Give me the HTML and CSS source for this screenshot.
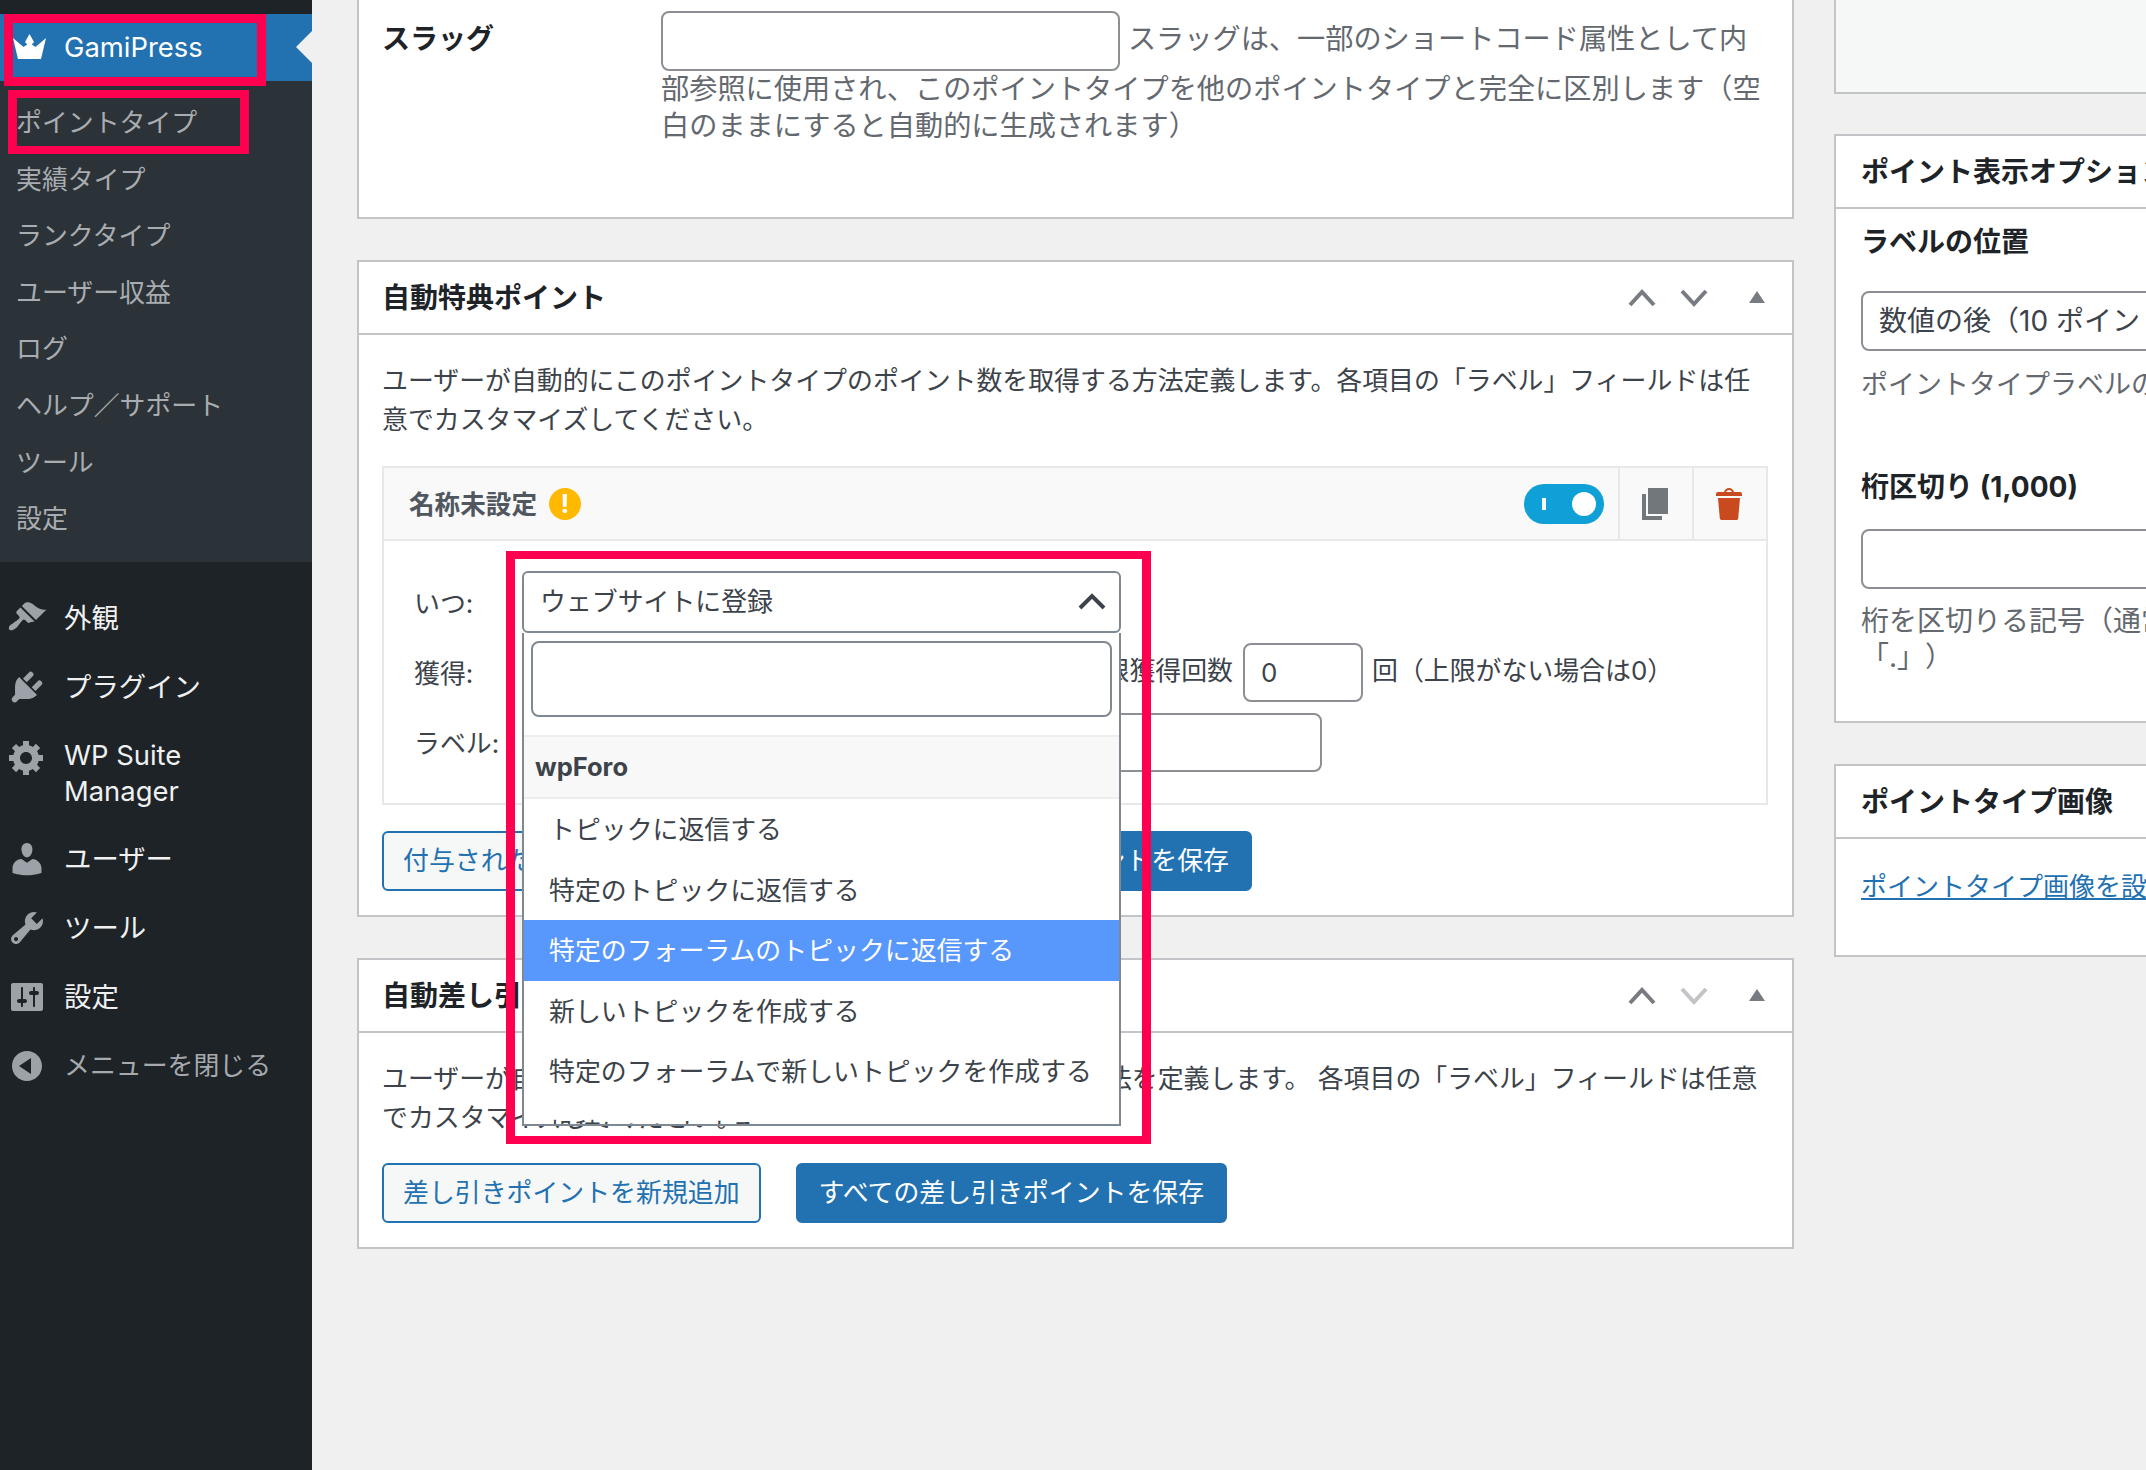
FILE: index.html
```html
<!DOCTYPE html>
<html lang="ja">
<head>
<meta charset="utf-8">
<title>GamiPress ポイントタイプ</title>
<link rel="stylesheet" href="styles.css">
</head>
<body>
<div class="page">
  <nav class="sidebar">
    <a class="current">
      <svg class="crown" viewBox="0 0 33 25"><path d="M16.500 0L21 8l-2.200 2.500L22.500 13 33 4l-5 21H5L0 4l10.500 9 3.700-2.500L12 8z"/></svg>
      <span>GamiPress</span>
    </a>
    <ul class="submenu">
      <li>ポイントタイプ</li>
      <li>実績タイプ</li>
      <li>ランクタイプ</li>
      <li>ユーザー収益</li>
      <li>ログ</li>
      <li>ヘルプ／サポート</li>
      <li>ツール</li>
      <li>設定</li>
    </ul>
    <ul class="mainmenu">
      <li><svg viewBox="0 0 20 20"><path d="M14.480 11.060L7.410 3.990l1.500-1.500c.5-.56 2.300-.47 3.510.32 1.210.8 1.430 1.280 2.910 2.100 1.180.64 2.450 1.260 4.450.85zm-.71.71L6.700 4.700 4.930 6.470c-.39.39-.39 1.020 0 1.410l1.060 1.060c.39.39.39 1.030 0 1.420-.6.6-1.430 1.110-2.210 1.690-.35.26-.7.53-1.010.84C1.430 13.230.4 14.980 1.250 15.840c.86.86 2.610-.18 3.950-1.520.31-.31.58-.66.85-1.020.57-.78 1.080-1.600 1.690-2.210.39-.39 1.020-.39 1.410 0l1.060 1.060c.39.39 1.020.39 1.410 0z"/></svg><span>外観</span></li>
      <li><svg viewBox="0 0 20 20"><path d="M13.110 4.360L9.870 7.600 8 5.730l3.240-3.240c.35-.34 1.050-.2 1.560.32.52.51.66 1.210.31 1.550zm-8 1.770l.91-1.120 9.010 9.010-1.190.84c-.71.71-2.630 1.160-3.820 1.160H6.140L4.900 17.260c-.59.59-1.540.59-2.120 0-.59-.58-.59-1.530 0-2.120l1.240-1.240v-3.880c0-1.130.4-3.190 1.090-3.890zm7.260 3.970l3.240-3.240c.34-.35 1.040-.2 1.550.31.52.52.66 1.220.32 1.570l-3.240 3.240z"/></svg><span>プラグイン</span></li>
      <li class="two-line"><svg viewBox="0 0 20 20"><path d="M18 12h-2.180c-.17.7-.44 1.350-.81 1.930l1.540 1.540-2.100 2.100-1.540-1.540c-.58.36-1.230.63-1.910.79V19H8v-2.180c-.68-.16-1.330-.43-1.910-.79l-1.540 1.540-2.120-2.120 1.540-1.540c-.36-.58-.63-1.230-.79-1.910H1V9.030h2.170c.16-.7.44-1.350.8-1.940L2.430 5.550l2.100-2.100 1.540 1.540c.58-.37 1.240-.64 1.930-.81V2h3v2.180c.68.16 1.330.43 1.910.79l1.540-1.540 2.120 2.120-1.540 1.540c.36.59.64 1.240.8 1.940H18V12zm-8.500 1.500c1.660 0 3-1.340 3-3s-1.340-3-3-3-3 1.340-3 3 1.340 3 3 3z"/></svg><span>WP Suite<br>Manager</span></li>
      <li><svg viewBox="0 0 20 20"><path d="M10 9.250c-2.270 0-2.730-3.440-2.730-3.440C7 4.020 7.820 2 9.970 2c2.160 0 2.980 2.020 2.710 3.810 0 0-.41 3.440-2.680 3.440zm0 2.570L12.720 10c2.390 0 4.520 2.330 4.520 4.530v2.490s-3.650 1.130-7.240 1.130c-3.650 0-7.240-1.130-7.240-1.130v-2.490c0-2.250 1.940-4.480 4.470-4.480z"/></svg><span>ユーザー</span></li>
      <li><svg viewBox="0 0 20 20"><path d="M16.680 9.770c-1.340 1.340-3.300 1.670-4.950.99l-5.410 6.520c-.99.99-2.590.99-3.580 0s-.99-2.590 0-3.570l6.520-5.420c-.68-1.650-.35-3.610.99-4.950 1.280-1.280 3.120-1.620 4.720-1.060l-2.890 2.890 2.820 2.820 2.860-2.870c.53 1.580.18 3.390-1.080 4.650zM3.810 16.210c.4.39 1.040.39 1.430 0 .4-.4.4-1.040 0-1.430-.39-.4-1.030-.4-1.430 0-.39.39-.39 1.030 0 1.430z"/></svg><span>ツール</span></li>
      <li><svg viewBox="0 0 20 20"><path d="M18 16V4c0-.55-.45-1-1-1H3c-.55 0-1 .45-1 1v12c0 .55.45 1 1 1h14c.55 0 1-.45 1-1zM8 11h1c.55 0 1 .45 1 1s-.45 1-1 1H8v1.500c0 .28-.22.5-.5.5s-.5-.22-.5-.5V13H6c-.55 0-1-.45-1-1s.45-1 1-1h1V5.500c0-.28.22-.5.5-.5s.5.22.5.5V11zm5-2h-1c-.55 0-1-.45-1-1s.45-1 1-1h1V5.500c0-.28.22-.5.5-.5s.5.22.5.5V7h1c.55 0 1 .45 1 1s-.45 1-1 1h-1v5.500c0 .28-.22.5-.5.5s-.5-.22-.5-.5V9z"/></svg><span>設定</span></li>
      <li class="collapse"><svg viewBox="0 0 20 20"><path fill-rule="evenodd" d="M10 2.500c-4.140 0-7.500 3.360-7.500 7.500s3.360 7.500 7.500 7.500 7.500-3.360 7.500-7.500-3.360-7.500-7.500-7.500zM12 6v8l-6-4z"/></svg><span>メニューを閉じる</span></li>
    </ul>
  </nav>

  <main class="content">
    <div class="col-main">
      <section class="panel panel-cut">
        <div class="slug-row">
          <strong class="slug-label">スラッグ</strong>
          <p class="slug-help"><input class="field slug-input" type="text"> スラッグは、一部のショートコード属性として内部参照に使用され、このポイントタイプを他のポイントタイプと完全に区別します（空白のままにすると自動的に生成されます）</p>
        </div>
      </section>

      <section class="panel">
        <header class="panel-head">
          <h2>自動特典ポイント</h2>
          <div class="handles">
            <svg class="chev" viewBox="0 0 28 18"><path d="M2 16L14 3l12 13"/></svg>
            <svg class="chev" viewBox="0 0 28 18"><path d="M2 2l12 13L26 2"/></svg>
            <svg class="tri" viewBox="0 0 16 12"><path d="M8 0l8 12H0z"/></svg>
          </div>
        </header>
        <div class="panel-body">
          <p class="desc">ユーザーが自動的にこのポイントタイプのポイント数を取得する方法定義します。各項目の「ラベル」フィールドは任意でカスタマイズしてください。</p>
          <div class="rule-box">
            <div class="rule-head">
              <span class="rule-title">名称未設定</span>
              <span class="warn">!</span>
              <span class="toggle"><i class="toggle-bar"></i><i class="toggle-knob"></i></span>
              <span class="rule-cell"><svg class="cell-icon copy" viewBox="3 2 13 16"><path d="M6 15V2h10v13H6zm-1 1h8v2H3V5h2v11z"/></svg></span>
              <span class="rule-cell"><svg class="cell-icon trash" viewBox="3 2 13 16"><path d="M12 4h3c.6 0 1 .4 1 1v1H3V5c0-.6.5-1 1-1h3c.2-1.100 1.300-2 2.500-2s2.300.9 2.500 2zM8 4h3c-.2-.6-.9-1-1.500-1S8.200 3.400 8 4zM4 7h11l-.9 10.100c0 .5-.5.9-1 .9H5.900c-.5 0-.9-.4-1-.9L4 7z"/></svg></span>
            </div>
            <div class="rule-body">
              <div class="rule-row">
                <label class="rule-label">いつ:</label>
                <div class="select2">
                  <div class="select2-value">ウェブサイトに登録
                    <svg class="select2-arrow" viewBox="0 0 28 18"><path d="M2 16L14 4l12 12"/></svg>
                  </div>
                  <div class="select2-drop">
                    <div class="select2-search"><input class="field search-input" type="text"></div>
                    <div class="select2-group">wpForo</div>
                    <ul class="select2-list">
                      <li>トピックに返信する</li>
                      <li>特定のトピックに返信する</li>
                      <li class="hl">特定のフォーラムのトピックに返信する</li>
                      <li>新しいトピックを作成する</li>
                      <li>特定のフォーラムで新しいトピックを作成する</li>
                      <li>投稿にいいねする</li>
                    </ul>
                  </div>
                </div>
              </div>
              <div class="rule-row row-earn">
                <label class="rule-label">獲得:</label>
                <span class="limit-label">上限獲得回数</span>
                <input class="field limit-input" type="text" value="0">
                <span class="limit-note">回（上限がない場合は0）</span>
              </div>
              <div class="rule-row row-label">
                <label class="rule-label">ラベル:</label>
                <input class="field label-input" type="text">
              </div>
            </div>
          </div>
          <div class="actions actions-wide">
            <a class="btn btn-secondary">付与されたポイントを新規追加</a>
            <a class="btn btn-primary">すべての付与ポイントを保存</a>
          </div>
        </div>
      </section>

      <section class="panel">
        <header class="panel-head">
          <h2>自動差し引きポイント</h2>
          <div class="handles">
            <svg class="chev" viewBox="0 0 28 18"><path d="M2 16L14 3l12 13"/></svg>
            <svg class="chev chev-off" viewBox="0 0 28 18"><path d="M2 2l12 13L26 2"/></svg>
            <svg class="tri" viewBox="0 0 16 12"><path d="M8 0l8 12H0z"/></svg>
          </div>
        </header>
        <div class="panel-body">
          <p class="desc">ユーザーが自動的にこのポイントタイプのポイント数を失う方法を定義します。 各項目の「ラベル」フィールドは任意でカスタマイズしてください。</p>
          <div class="actions actions-tight">
            <a class="btn btn-secondary">差し引きポイントを新規追加</a>
            <a class="btn btn-primary">すべての差し引きポイントを保存</a>
          </div>
        </div>
      </section>
    </div>

    <aside class="col-side">
      <section class="side-panel side-publish"></section>
      <section class="side-panel">
        <h2 class="side-head">ポイント表示オプション</h2>
        <div class="side-body side-options">
          <h3 class="opt-first">ラベルの位置</h3>
          <div class="field side-select">数値の後（10 ポイント）</div>
          <p class="help">ポイントタイプラベルの位置を選択します</p>
          <h3 class="opt-next">桁区切り (1,000)</h3>
          <input class="field side-input" type="text">
          <p class="help help-sep">桁を区切りる記号（通常は「,」または<br>「.」）</p>
        </div>
      </section>
      <section class="side-panel">
        <h2 class="side-head">ポイントタイプ画像</h2>
        <div class="side-body side-image"><a class="side-link">ポイントタイプ画像を設定</a></div>
      </section>
    </aside>
  </main>

  <i class="mark mark-menu"></i>
  <i class="mark mark-sub"></i>
  <i class="mark mark-drop"></i>
</div>
</body>
</html>
```

FILE: styles.css
```css
* { box-sizing: border-box; }
html, body { margin: 0; padding: 0; }
body {
  width: 2146px;
  height: 1470px;
  overflow: hidden;
  background: #f0f0f1;
  color: #3c434a;
  font-family: Inter, "Noto Sans CJK JP", sans-serif;
  font-size: 25.9px;
  text-spacing-trim: space-all;
}
ul { list-style: none; margin: 0; padding: 0; }
p, h2, h3 { margin: 0; }

.page { position: relative; display: flex; width: 2146px; height: 1470px; overflow: hidden; }

/* sidebar */
.sidebar { flex: 0 0 312px; background: #1d2327; padding-top: 14px; color: #f0f0f1; }
.current {
  position: relative;
  display: flex;
  align-items: center;
  height: 67px;
  background: #2271b1;
  color: #fff;
  font-size: 27.4px;
  padding: 0 0 2px 13px;
}
.current::after {
  content: "";
  position: absolute;
  right: 0;
  top: 17px;
  border: 16px solid transparent;
  border-right-color: #f0f0f1;
  border-left-width: 0;
}
.crown { width: 33px; height: 25px; fill: #fff; margin-right: 18px; }
.submenu {
  background: #2c3338;
  color: #a9adb1;
  padding: 14px 0 14px 16px;
  font-size: 25.9px;
}
.submenu li { height: 56.600px; line-height: 56.600px; }
.mainmenu { margin-top: 22px; font-size: 27.400px; }
.mainmenu li { display: flex; align-items: center; height: 69px; padding-left: 7px; }
.mainmenu svg { flex: 0 0 40px; width: 40px; height: 40px; fill: #9ca2a7; margin-right: 17px; }
.mainmenu span { line-height: 36px; }
.mainmenu .two-line { height: 103px; align-items: flex-start; padding-top: 15px; }
.mainmenu .two-line svg { margin-top: 0; }
.mainmenu .collapse { color: #a7aaad; font-size: 25.9px; }

/* content */
.content { display: flex; flex: none; gap: 40px; padding-left: 45px; width: 2200px; align-items: flex-start; }
.col-main { flex: 0 0 1437px; display: flex; flex-direction: column; gap: 41px; }
.col-side { flex: 0 0 560px; }

.panel { background: #fff; border: 2px solid #c3c4c7; }
.panel-cut { border-top: 0; height: 219px; }
.slug-row { display: flex; padding: 11px 0 0 23px; }
.slug-label { flex: 0 0 279px; color: #1d2327; font-size: 28px; line-height: 56px; }
.slug-help { flex: 1; color: #646970; font-size: 28.2px; line-height: 37px; padding-right: 24px; }
.field {
  border: 2px solid #8c8f94;
  border-radius: 8px;
  background: #fff;
  font: inherit;
  color: #3c434a;
  outline: 0;
}
.slug-input { width: 459px; height: 60px; vertical-align: middle; margin: 0; }

.panel-head {
  display: flex;
  align-items: center;
  height: 73px;
  border-bottom: 2px solid #c3c4c7;
  padding: 0 27px 0 23px;
}
.panel-head h2 { color: #1d2327; font-size: 28px; font-weight: 700; line-height: 1; margin-top: 1px; }
.handles { display: flex; align-items: center; margin-left: auto; }
.chev { width: 28px; height: 18px; fill: none; stroke: #787c82; stroke-width: 4; margin-right: 24px; }
.chev + .chev { margin-right: 41px; }
.chev-off { stroke: #c3c4c7; }
.tri { width: 16px; height: 12px; fill: #787c82; margin-top: -2px; }

.panel-body { padding: 26px 24px 24px 23px; }
.desc { line-height: 39px; }

.rule-box { margin-top: 27px; border: 2px solid #e8e8e8; }
.rule-head {
  display: flex;
  align-items: center;
  height: 73px;
  background: #f9f9f9;
  border-bottom: 2px solid #e8e8e8;
  padding-left: 25px;
}
.rule-title { font-weight: 700; color: #50575e; font-size: 25.600px; margin-top: -3px; }
.warn {
  width: 32px;
  height: 32px;
  margin-left: 12px;
  border-radius: 50%;
  background: #ffb900;
  color: #fff;
  font-weight: 700;
  font-size: 26px;
  line-height: 32px;
  text-align: center;
}
.toggle {
  position: relative;
  width: 80px;
  height: 40px;
  margin-left: auto;
  margin-right: 14px;
  border-radius: 20px;
  background: #0ea0d6;
}
.toggle-bar { position: absolute; left: 18px; top: 14px; width: 4px; height: 12px; background: #fff; }
.toggle-knob { position: absolute; right: 8px; top: 8px; width: 24px; height: 24px; border-radius: 50%; background: #fff; }
.rule-cell {
  display: flex;
  align-items: center;
  justify-content: center;
  width: 74px;
  height: 71px;
  padding-right: 2px;
  border-left: 2px solid #e8e8e8;
}
.cell-icon { width: 26px; height: 32px; }
.copy { fill: #72777c; }
.trash { fill: #ca4a1f; }

.rule-body { padding: 30px 0 31px 30px; }
.rule-row { display: flex; align-items: center; }
.rule-label { flex: 0 0 108px; margin-bottom: 2px; }
.row-earn { margin-top: 10px; height: 59px; }
.row-label { margin-top: 11px; }
.limit-label { width: 711px; text-align: right; margin: 0 10px 8px 0; white-space: nowrap; }
.limit-input { width: 120px; height: 59px; padding: 0 16px; margin: 0 9px 0 0; }
.limit-note { margin-bottom: 8px; }
.label-input { width: 800px; height: 59px; margin: 0; }

.select2 { position: relative; width: 599px; height: 62px; }
.select2-value {
  position: relative;
  height: 62px;
  line-height: 58px;
  padding-left: 16px;
  border: 2px solid #7e8993;
  border-radius: 6px;
  background: #fff;
}
.select2-arrow { position: absolute; right: 13px; top: 19px; width: 28px; height: 18px; fill: none; stroke: #3c434a; stroke-width: 4; }
.select2-drop {
  position: absolute;
  left: 0;
  top: 62px;
  z-index: 3;
  width: 599px;
  height: 493px;
  overflow: hidden;
  background: #fff;
  border: 2px solid #7e8993;
  border-top: 0;
}
.select2-search { padding: 8px 7px 18px 7px; height: 102px; }
.search-input { display: block; width: 100%; height: 76px; margin: 0; border-color: #7e8993; }
.select2-group {
  height: 64px;
  line-height: 60px;
  padding-left: 11px;
  font-weight: 700;
  background: #f8f8f8;
  border-top: 2px solid #eee;
  border-bottom: 2px solid #eee;
  font-size: 25.500px;
}
.select2-list li { height: 60.500px; line-height: 62px; padding-left: 25px; white-space: nowrap; }
.select2-list .hl { background: #5897fb; color: #fff; }

.actions { display: flex; }
.actions-wide { margin-top: 26px; width: 870px; justify-content: space-between; }
.actions-tight { margin-top: 26px; gap: 35px; }
.btn {
  display: block;
  height: 60px;
  padding: 0 19px;
  line-height: 56px;
  border-radius: 6px;
  border: 2px solid #2271b1;
  white-space: nowrap;
}
.btn-secondary { background: #f6f7f7; color: #2271b1; }
.btn-primary { background: #2271b1; color: #fff; padding: 0 21px; }

/* side column */
.side-panel { background: #fff; border: 2px solid #c3c4c7; border-right: 0; margin-bottom: 41px; white-space: nowrap; overflow: hidden; font-size: 28px; }
.side-publish { height: 94px; border-top: 0; background: #f6f7f7; margin-bottom: 40px; }
.side-head {
  height: 73px;
  line-height: 72px;
  padding-left: 25px;
  border-bottom: 2px solid #c3c4c7;
  color: #1d2327;
  font-size: 28px;
  font-weight: 700;
}
.side-body { padding-left: 25px; }
.side-options { padding-top: 15px; padding-bottom: 46px; }
.side-options h3 { color: #1d2327; font-size: 28px; font-weight: 700; line-height: 36px; }
.opt-next { margin-top: 66px; }
.side-select { width: 500px; height: 60px; line-height: 56px; padding-left: 16px; margin-top: 31px; border-radius: 8px; }
.side-input { display: block; width: 500px; height: 60px; margin: 24px 0 0; }
.help { color: #646970; font-size: 27px; line-height: 36px; margin-top: 16px; }
.help-sep { font-size: 28px; margin-top: 14px; }
.side-image { height: 116px; padding-top: 29px; line-height: 36px; }
.side-link { color: #2271b1; font-size: 26px; text-decoration: underline; }

/* annotations */
.mark { position: absolute; z-index: 10; border: 8px solid #ff0050; }
.mark-menu { left: 4px; top: 14px; width: 262px; height: 72px; border-width: 9px; }
.mark-sub { left: 8px; top: 90px; width: 241px; height: 64px; border-width: 8px 9px; }
.mark-drop { left: 506px; top: 551px; width: 645px; height: 593px; border-width: 8px 9px; }
```
